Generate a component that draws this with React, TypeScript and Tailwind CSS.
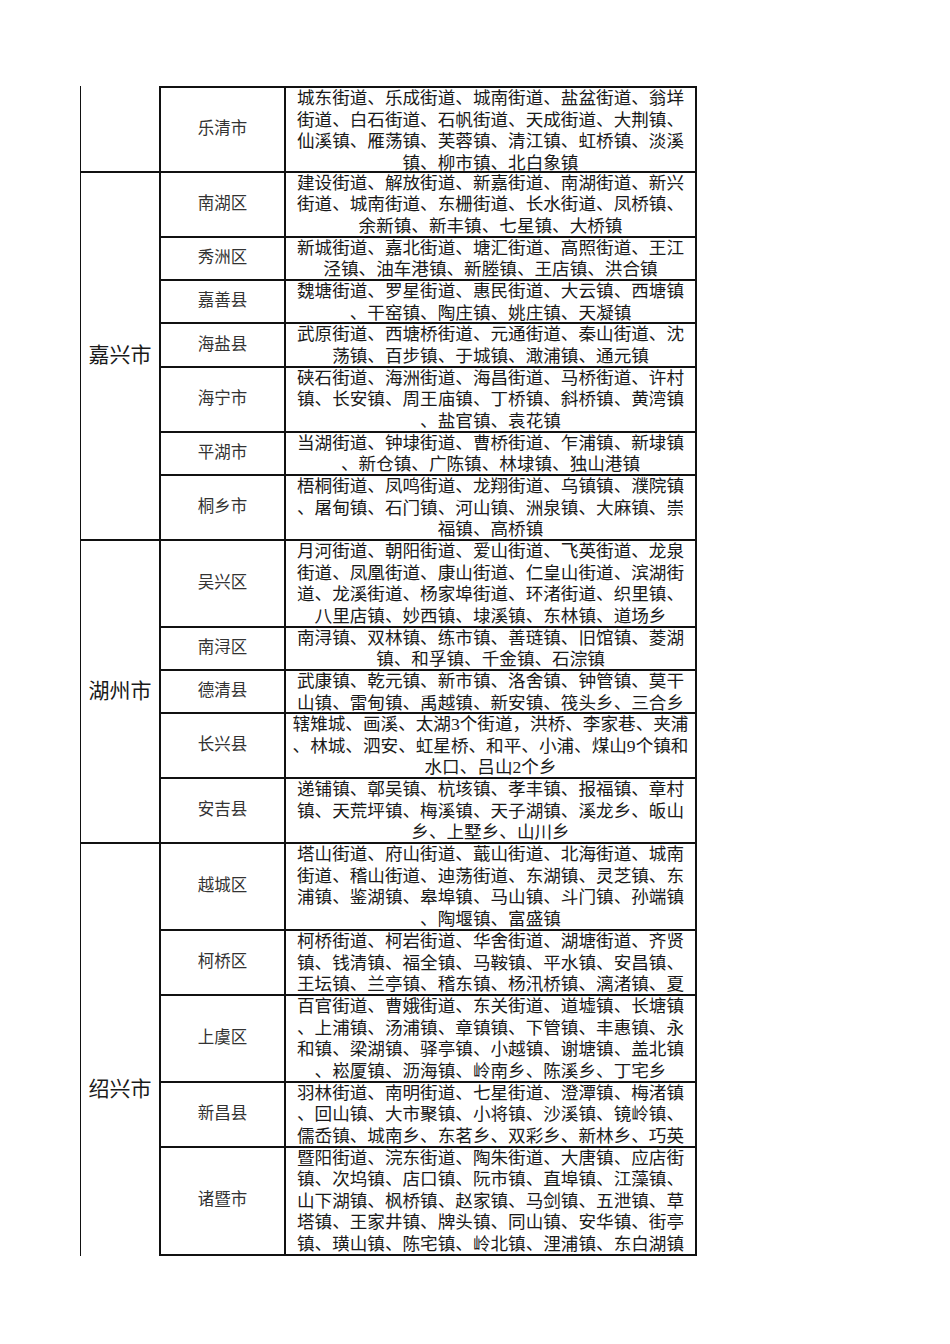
import React from "react";

type Row = { district: string; lines: string[] };

const cities: { name: string; rows: Row[]; last?: boolean; lead?: boolean }[] = [
  {
    name: "",
    lead: true,
    rows: [
      {
        district: "乐清市",
        lines: [
          "城东街道、乐成街道、城南街道、盐盆街道、翁垟",
          "街道、白石街道、石帆街道、天成街道、大荆镇、",
          "仙溪镇、雁荡镇、芙蓉镇、清江镇、虹桥镇、淡溪",
          "镇、柳市镇、北白象镇",
        ],
      },
    ],
  },
  {
    name: "嘉兴市",
    rows: [
      {
        district: "南湖区",
        lines: [
          "建设街道、解放街道、新嘉街道、南湖街道、新兴",
          "街道、城南街道、东栅街道、长水街道、凤桥镇、",
          "余新镇、新丰镇、七星镇、大桥镇",
        ],
      },
      {
        district: "秀洲区",
        lines: [
          "新城街道、嘉北街道、塘汇街道、高照街道、王江",
          "泾镇、油车港镇、新塍镇、王店镇、洪合镇",
        ],
      },
      {
        district: "嘉善县",
        lines: [
          "魏塘街道、罗星街道、惠民街道、大云镇、西塘镇",
          "、干窑镇、陶庄镇、姚庄镇、天凝镇",
        ],
      },
      {
        district: "海盐县",
        lines: [
          "武原街道、西塘桥街道、元通街道、秦山街道、沈",
          "荡镇、百步镇、于城镇、澉浦镇、通元镇",
        ],
      },
      {
        district: "海宁市",
        lines: [
          "硖石街道、海洲街道、海昌街道、马桥街道、许村",
          "镇、长安镇、周王庙镇、丁桥镇、斜桥镇、黄湾镇",
          "、盐官镇、袁花镇",
        ],
      },
      {
        district: "平湖市",
        lines: [
          "当湖街道、钟埭街道、曹桥街道、乍浦镇、新埭镇",
          "、新仓镇、广陈镇、林埭镇、独山港镇",
        ],
      },
      {
        district: "桐乡市",
        lines: [
          "梧桐街道、凤鸣街道、龙翔街道、乌镇镇、濮院镇",
          "、屠甸镇、石门镇、河山镇、洲泉镇、大麻镇、崇",
          "福镇、高桥镇",
        ],
      },
    ],
  },
  {
    name: "湖州市",
    rows: [
      {
        district: "吴兴区",
        lines: [
          "月河街道、朝阳街道、爱山街道、飞英街道、龙泉",
          "街道、凤凰街道、康山街道、仁皇山街道、滨湖街",
          "道、龙溪街道、杨家埠街道、环渚街道、织里镇、",
          "八里店镇、妙西镇、埭溪镇、东林镇、道场乡",
        ],
      },
      {
        district: "南浔区",
        lines: [
          "南浔镇、双林镇、练市镇、善琏镇、旧馆镇、菱湖",
          "镇、和孚镇、千金镇、石淙镇",
        ],
      },
      {
        district: "德清县",
        lines: [
          "武康镇、乾元镇、新市镇、洛舍镇、钟管镇、莫干",
          "山镇、雷甸镇、禹越镇、新安镇、筏头乡、三合乡",
        ],
      },
      {
        district: "长兴县",
        lines: [
          "辖雉城、画溪、太湖3个街道，洪桥、李家巷、夹浦",
          "、林城、泗安、虹星桥、和平、小浦、煤山9个镇和",
          "水口、吕山2个乡",
        ],
      },
      {
        district: "安吉县",
        lines: [
          "递铺镇、鄣吴镇、杭垓镇、孝丰镇、报福镇、章村",
          "镇、天荒坪镇、梅溪镇、天子湖镇、溪龙乡、皈山",
          "乡、上墅乡、山川乡",
        ],
      },
    ],
  },
  {
    name: "绍兴市",
    last: true,
    rows: [
      {
        district: "越城区",
        lines: [
          "塔山街道、府山街道、蕺山街道、北海街道、城南",
          "街道、稽山街道、迪荡街道、东湖镇、灵芝镇、东",
          "浦镇、鉴湖镇、皋埠镇、马山镇、斗门镇、孙端镇",
          "、陶堰镇、富盛镇",
        ],
      },
      {
        district: "柯桥区",
        lines: [
          "柯桥街道、柯岩街道、华舍街道、湖塘街道、齐贤",
          "镇、钱清镇、福全镇、马鞍镇、平水镇、安昌镇、",
          "王坛镇、兰亭镇、稽东镇、杨汛桥镇、漓渚镇、夏",
        ],
      },
      {
        district: "上虞区",
        lines: [
          "百官街道、曹娥街道、东关街道、道墟镇、长塘镇",
          "、上浦镇、汤浦镇、章镇镇、下管镇、丰惠镇、永",
          "和镇、梁湖镇、驿亭镇、小越镇、谢塘镇、盖北镇",
          "、崧厦镇、沥海镇、\u5cad南乡、陈溪乡、丁宅乡",
        ],
      },
      {
        district: "新昌县",
        lines: [
          "羽林街道、南明街道、七星街道、澄潭镇、梅渚镇",
          "、回山镇、大市聚镇、小将镇、沙溪镇、镜\u5cad镇、",
          "儒岙镇、城南乡、东茗乡、双彩乡、新林乡、巧英",
        ],
      },
      {
        district: "诸暨市",
        lines: [
          "暨阳街道、浣东街道、陶朱街道、大唐镇、应店街",
          "镇、次坞镇、店口镇、阮市镇、直埠镇、江藻镇、",
          "山下湖镇、枫桥镇、赵家镇、马剑镇、五泄镇、草",
          "塔镇、王家井镇、牌头镇、同山镇、安华镇、街亭",
          "镇、璜山镇、陈宅镇、\u5cad北镇、浬浦镇、东白湖镇",
        ],
      },
    ],
  },
];

const heights: Record<number, string> = {
  2: "h-[43.33px]",
  3: "h-[65px]",
  4: "h-[86.67px]",
  5: "h-[108.33px]",
};

const spans: Record<number, string> = {
  1: "row-span-1",
  5: "row-span-5",
  7: "row-span-7",
};

export default function App() {
  return (
    <div
      lang="zh-CN"
      className="min-h-screen w-full bg-white pl-[80px] pt-[86px]"
      style={{ fontFamily: '"Liberation Serif", "Noto Sans CJK SC", sans-serif' }}
    >
      <div className="grid w-[617px] grid-cols-[79px_125px_413px] text-[#1a1a1a]">
        {cities.map((city) => (
          <React.Fragment key={city.name || "lead"}>
            {city.rows.map((row, i) => (
              <React.Fragment key={row.district}>
                {i === 0 && (
                  <div
                    className={`${spans[city.rows.length]} flex items-center justify-center border-l border-[#111] text-[21px] ${
                      city.last ? "pt-[80px]" : "border-b-2"
                    }`}
                  >
                    {city.name}
                  </div>
                )}
                <div
                  className={`${heights[row.lines.length]} flex items-center justify-center border-b-2 border-l-2 border-[#111] text-[16.5px] text-[#333] ${
                    city.lead ? "border-t-2" : ""
                  }`}
                >
                  {row.district}
                </div>
                <div
                  className={`${heights[row.lines.length]} flex flex-col items-center overflow-hidden border-x-2 border-b-2 border-[#111] text-[17.6px] leading-[21.6px] ${
                    city.lead ? "border-t-2" : ""
                  }`}
                >
                  {row.lines.map((line) => (
                    <div key={line} className="whitespace-nowrap">
                      {line}
                    </div>
                  ))}
                </div>
              </React.Fragment>
            ))}
          </React.Fragment>
        ))}
      </div>
    </div>
  );
}
